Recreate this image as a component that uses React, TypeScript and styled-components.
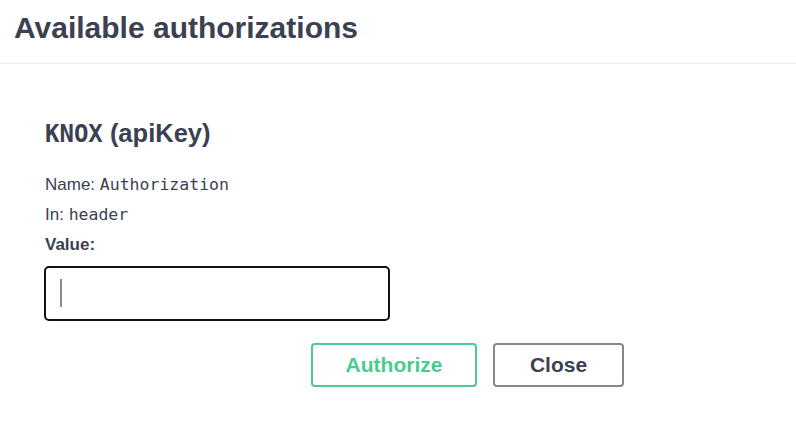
import React from "react";
import styled, { createGlobalStyle } from "styled-components";

const Global = createGlobalStyle`
  html, body { margin: 0; padding: 0; background: #fff; }
  body { font-family: "Liberation Sans", Arial, sans-serif; color: #3b4151; }
`;

const Modal = styled.div`
  width: 796px;
  height: 432px;
  background: #fff;
`;

const Header = styled.div`
  height: 64px;
  border-bottom: 1px solid #ebebeb;
  padding: 0 14px;
  box-sizing: border-box;
`;

const Title = styled.h3`
  margin: 0;
  padding-top: 11px;
  font-size: 30px;
  line-height: 34px;
  font-weight: 700;
  color: #3b4151;
`;

const Body = styled.div`
  padding: 54px 45px 0;
`;

const SchemeTitle = styled.h4`
  margin: 0 0 25px;
  font-size: 25.5px;
  line-height: 30px;
  font-weight: 700;
  color: #3b4151;
`;

const Code = styled.code`
  font-family: "DejaVu Sans Mono", "Liberation Mono", monospace;
  font-weight: 700;
  font-size: 24px;
`;

const Row = styled.p`
  margin: 0 0 8px;
  font-size: 17px;
  line-height: 22px;
`;

const Mono = styled.code`
  font-family: "DejaVu Sans Mono", "Liberation Mono", monospace;
  font-size: 16.5px;
`;

const Label = styled.label`
  display: block;
  font-size: 17px;
  line-height: 22px;
  font-weight: 700;
  margin: 6px 0 10px;
`;

const Field = styled.div`
  position: relative;
  width: 346px;
  margin-left: -1px;
`;

const Input = styled.input`
  display: block;
  box-sizing: border-box;
  width: 346px;
  height: 55px;
  margin: 0;
  padding: 0 14px;
  border: 2px solid #111;
  border-radius: 5px;
  outline: none;
  font-size: 22px;
  caret-color: transparent;
  background: #fff;
`;

const Caret = styled.span`
  position: absolute;
  left: 16px;
  top: 13px;
  width: 2px;
  height: 28px;
  background: #8a8a8a;
  pointer-events: none;
`;

const Actions = styled.div`
  display: flex;
  gap: 16px;
  padding: 22px 0 0 266px;
`;

const Button = styled.button<{ $variant: "primary" | "plain" }>`
  box-sizing: border-box;
  height: 44px;
  width: ${(p) => (p.$variant === "primary" ? "166px" : "131px")};
  border: 2px solid ${(p) => (p.$variant === "primary" ? "#49cc90" : "#888")};
  border-radius: 4px;
  background: transparent;
  color: ${(p) => (p.$variant === "primary" ? "#49cc90" : "#3b4151")};
  font-family: "Liberation Sans", Arial, sans-serif;
  font-weight: 700;
  font-size: 21px;
  padding: 0;
  cursor: pointer;
`;

export default function App() {
  return (
    <>
      <Global />
      <Modal>
        <Header>
          <Title>Available authorizations</Title>
        </Header>
        <Body>
          <SchemeTitle>
            <Code>KNOX</Code> (apiKey)
          </SchemeTitle>
          <Row>
            Name: <Mono>Authorization</Mono>
          </Row>
          <Row>
            In: <Mono>header</Mono>
          </Row>
          <Label htmlFor="val">Value:</Label>
          <Field>
            <Input id="val" type="text" autoFocus />
            <Caret />
          </Field>
          <Actions>
            <Button $variant="primary">Authorize</Button>
            <Button $variant="plain">Close</Button>
          </Actions>
        </Body>
      </Modal>
    </>
  );
}
